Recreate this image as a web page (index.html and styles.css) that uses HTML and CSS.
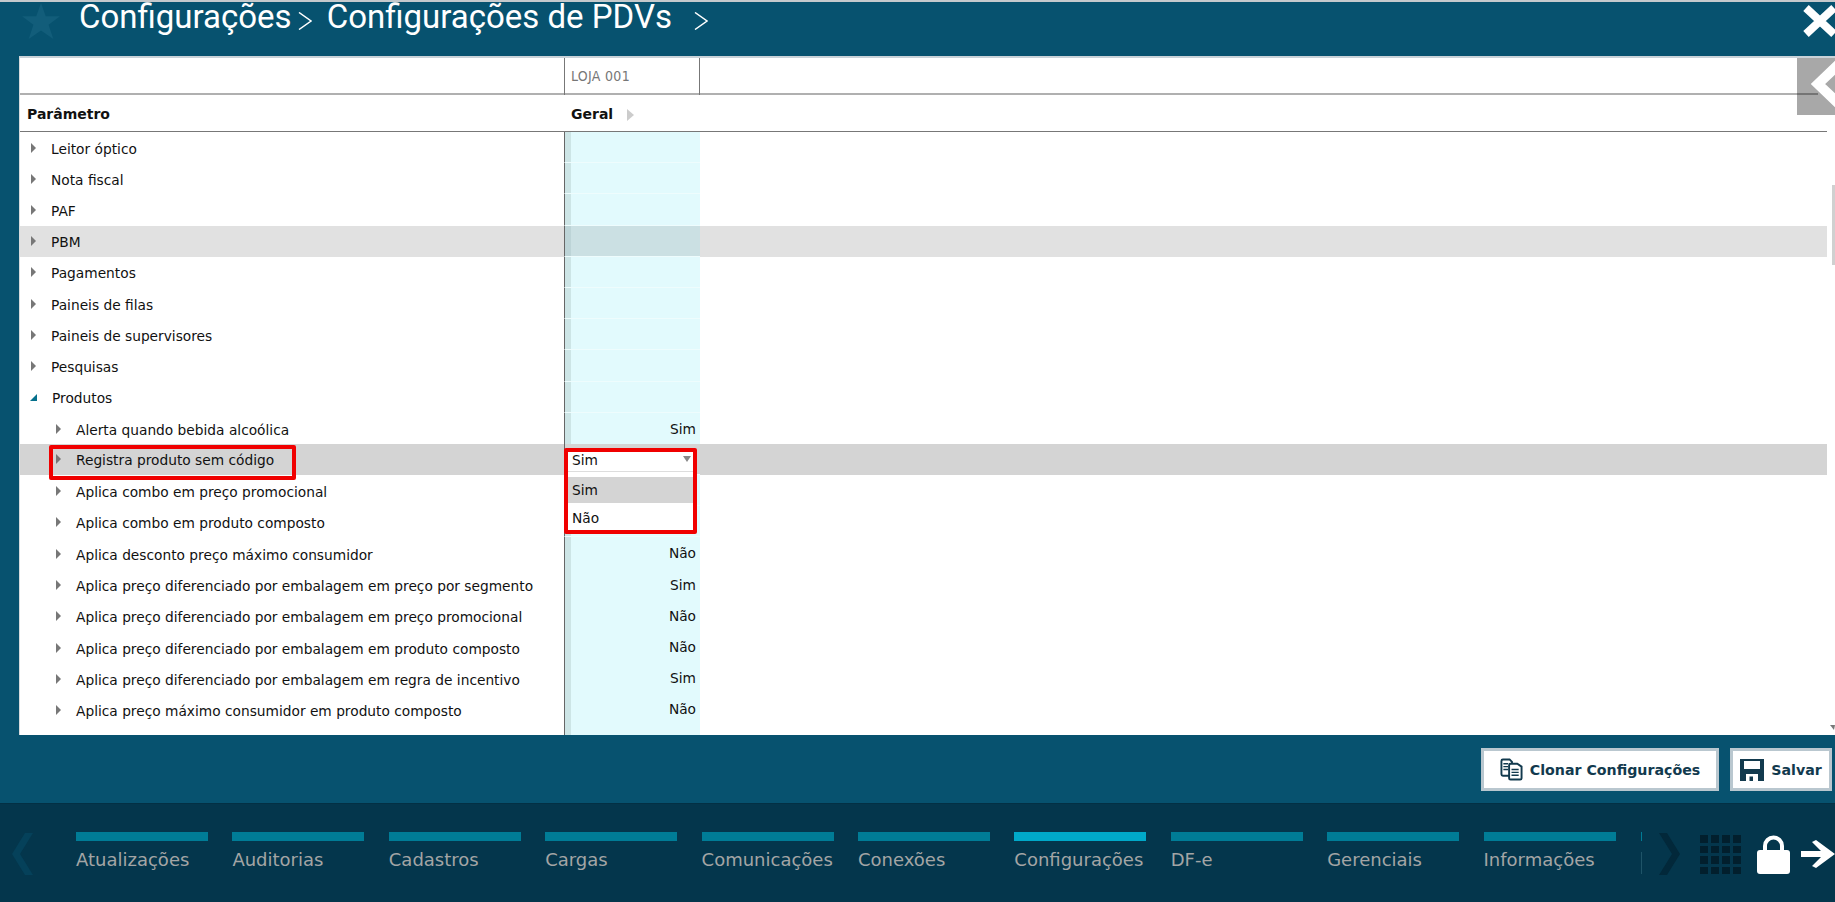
FILE: index.html
```html
<!DOCTYPE html>
<html lang="pt-BR">
<head>
<meta charset="utf-8">
<title>Configurações de PDVs</title>
<link rel="stylesheet" href="styles.css">
</head>
<body>
<div class="app">
  <header class="topbar">
    <svg class="star" viewBox="0 0 40 38"><polygon points="20,0 25,14 40,14 28,23 33,38 20,29 7,38 12,23 0,14 15,14"/></svg>
    <span class="crumb crumb-first">Configurações</span>
    <svg class="sep" viewBox="0 0 14 18"><path d="M1 0.500 L13 9 L1 17.500"/></svg>
    <span class="crumb crumb-second">Configurações de PDVs</span>
    <svg class="sep sep-last" viewBox="0 0 14 18"><path d="M1 0.500 L13 9 L1 17.500"/></svg>
    <svg class="close" viewBox="0 0 34 32"><path d="M3 3 L31 29 M31 3 L3 29"/></svg>
  </header>

  <main class="panel">
    <div class="head head-store">
      <div class="h-name"></div>
      <div class="h-store">LOJA 001</div>
    </div>
    <div class="head head-title">
      <div class="h-name">Parâmetro</div>
      <div class="h-group">Geral <i class="group-arrow"></i></div>
    </div>
    <div class="rows">
      <div class="row"><div class="name"><i class="tri"></i>Leitor óptico</div><div class="val"></div></div>
      <div class="row"><div class="name"><i class="tri"></i>Nota fiscal</div><div class="val"></div></div>
      <div class="row"><div class="name"><i class="tri"></i>PAF</div><div class="val"></div></div>
      <div class="row row-hover"><div class="name"><i class="tri"></i>PBM</div><div class="val"></div></div>
      <div class="row"><div class="name"><i class="tri"></i>Pagamentos</div><div class="val"></div></div>
      <div class="row"><div class="name"><i class="tri"></i>Paineis de filas</div><div class="val"></div></div>
      <div class="row"><div class="name"><i class="tri"></i>Paineis de supervisores</div><div class="val"></div></div>
      <div class="row"><div class="name"><i class="tri"></i>Pesquisas</div><div class="val"></div></div>
      <div class="row"><div class="name"><i class="tri-open"></i>Produtos</div><div class="val"></div></div>
      <div class="row child"><div class="name"><i class="tri"></i>Alerta quando bebida alcoólica</div><div class="val">Sim</div></div>
      <div class="row child row-selected"><div class="name"><i class="tri"></i>Registra produto sem código</div><div class="val"></div></div>
      <div class="row child"><div class="name"><i class="tri"></i>Aplica combo em preço promocional</div><div class="val"></div></div>
      <div class="row child"><div class="name"><i class="tri"></i>Aplica combo em produto composto</div><div class="val"></div></div>
      <div class="row child"><div class="name"><i class="tri"></i>Aplica desconto preço máximo consumidor</div><div class="val">Não</div></div>
      <div class="row child"><div class="name"><i class="tri"></i>Aplica preço diferenciado por embalagem em preço por segmento</div><div class="val">Sim</div></div>
      <div class="row child"><div class="name"><i class="tri"></i>Aplica preço diferenciado por embalagem em preço promocional</div><div class="val">Não</div></div>
      <div class="row child"><div class="name"><i class="tri"></i>Aplica preço diferenciado por embalagem em produto composto</div><div class="val">Não</div></div>
      <div class="row child"><div class="name"><i class="tri"></i>Aplica preço diferenciado por embalagem em regra de incentivo</div><div class="val">Sim</div></div>
      <div class="row child"><div class="name"><i class="tri"></i>Aplica preço máximo consumidor em produto composto</div><div class="val">Não</div></div>
      <div class="row"><div class="name"></div><div class="val"></div></div>
    </div>

    <div class="mark mark-row"></div>
    <div class="dropdown">
      <div class="dd-value">Sim<i class="dd-arrow"></i></div>
      <div class="dd-option dd-active">Sim</div>
      <div class="dd-option dd-last">Não</div>
    </div>

    <div class="side-tab"><svg viewBox="0 0 38 59"><path d="M44 7 L21 29 L44 51"/></svg></div>
    <div class="scroll-thumb"></div>
    <i class="scroll-down"></i>
  </main>

  <div class="actions">
    <button class="btn btn-clone">
      <svg class="btn-icon" viewBox="0 0 24 24"><path class="doc" d="M3 1.500 h7 l2.500 2.500 v13 q0 1.500 -1.500 1.500 h-8 q-1.500 0 -1.500 -1.500 v-14 q0 -1.500 1.500 -1.500 z"/><path class="doc" d="M11 6 h7 l4.500 3 v12 q0 1.500 -1.500 1.500 h-10 q-1.500 0 -1.500 -1.500 v-13.500 q0 -1.500 1.500 -1.500 z"/><path class="lines" d="M3.500 6 h5 M3.500 9 h5 M3.500 12 h5 M12 12 h7.500 M12 15 h7.500 M12 18 h7.500"/></svg>
      Clonar Configurações
    </button>
    <button class="btn btn-save">
      <svg class="btn-icon save-icon" viewBox="0 0 24 22"><path fill-rule="evenodd" d="M0 0 H24 V22 H0 Z M4 2 V10 H20 V2 Z M6 15 V22 H18 V15 Z M9.500 17.500 H13 V22 H9.500 Z"/></svg>
      Salvar
    </button>
  </div>

  <footer class="dock">
    <svg class="chev chev-left" viewBox="0 0 21 42"><path d="M21 0 H13 L0 21 L13 42 H21 L8 21 Z"/></svg>
    <nav class="modules">
      <a class="module">Atualizações</a>
      <a class="module">Auditorias</a>
      <a class="module">Cadastros</a>
      <a class="module">Cargas</a>
      <a class="module">Comunicações</a>
      <a class="module">Conexões</a>
      <a class="module module-active">Configurações</a>
      <a class="module">DF-e</a>
      <a class="module">Gerenciais</a>
      <a class="module">Informações</a>
      <i class="module-sliver"></i>
    </nav>
    <svg class="chev chev-right" viewBox="0 0 21 42"><path d="M0 0 H8 L21 21 L8 42 H0 L13 21 Z"/></svg>
    <div class="apps">
      <i></i><i></i><i></i><i></i><i></i><i></i><i></i><i></i><i></i><i></i><i></i><i></i><i></i><i></i><i></i><i></i>
    </div>
    <svg class="lock" viewBox="0 0 33 40"><path class="shackle" d="M8 19 V12 a8.500 8.500 0 0 1 17 0 V19"/><rect y="16" width="33" height="24" rx="3"/></svg>
    <svg class="exit" viewBox="0 0 34 28"><path d="M0 11 H20 L11 2 L15 0 L34 14 L15 28 L11 26 L20 17 H0 Z"/></svg>
  </footer>
</div>
</body>
</html>
```

FILE: styles.css
```css
* { box-sizing: border-box; }
html, body { margin: 0; height: 100%; overflow: hidden; }
body { font-family: "DejaVu Sans", Verdana, sans-serif; color: #111; background: #07526f; }
.app { display: flex; flex-direction: column; height: 902px; border-top: 2px solid #c4c9cc; }

.topbar { height: 54px; flex: none; display: flex; align-items: flex-start; background: #07526f; position: relative; color: #fff; }
.star { width: 40px; height: 36px; margin: 1px 0 0 21px; flex: none; }
.star polygon { fill: #125d7a; }
.crumb { font-family: Roboto, sans-serif; font-size: 33px; line-height: 30px; white-space: nowrap; }
.crumb-first { margin-left: 18px; }
.crumb-second { margin-left: 15px; }
.sep { width: 14px; height: 18px; margin: 10px 0 0 6px; flex: none; }
.sep-last { margin-left: 22px; }
.sep path { fill: none; stroke: #fff; stroke-width: 1.500; }
.close { position: absolute; right: -2px; top: 3px; width: 34px; height: 32px; }
.close path { fill: none; stroke: #fff; stroke-width: 8; }

.panel { height: 679px; flex: none; margin-left: 19px; background: #fff; padding-right: 8px; position: relative; overflow: hidden; border-top: 2px solid #c9d2d8; border-left: 1px solid #d6dadc; font-size: 13.750px; }
.head { display: grid; grid-template-columns: 544px 136px 1fr; }
.head-store { height: 37px; border-bottom: 2px solid #b0b0b0; margin-right: 9px; }
.head-title { height: 37px; border-bottom: 1px solid #777; font-weight: 700; font-size: 14px; }
.h-name { padding-left: 7px; line-height: 38px; color: #111; }
.h-store { border-left: 1px solid #777; border-right: 1px solid #777; padding-left: 6px; line-height: 37px; color: #777; font-size: 14px; font-stretch: condensed; letter-spacing: .3px; }
.h-group { padding-left: 7px; line-height: 38px; }
.group-arrow { display: inline-block; margin-left: 9px; border-left: 7px solid #ccc; border-top: 6px solid transparent; border-bottom: 6px solid transparent; vertical-align: -2px; }

.row { display: grid; grid-template-columns: 544px 136px 1fr; height: 31.200px; }
.name { display: flex; align-items: center; padding: 2px 0 0 11px; white-space: nowrap; }
.child .name { padding-left: 36px; }
.tri { flex: none; width: 0; height: 0; margin: -2px 15px 0 0; border-left: 5px solid #777; border-top: 5px solid transparent; border-bottom: 5px solid transparent; }
.tri-open { flex: none; width: 0; height: 0; margin: -2px 15px 0 -1px; border-bottom: 7px solid #05708c; border-left: 7px solid transparent; }
.val { border-left: 1px solid #666; border-bottom: 1px solid #eefcfd; padding-right: 4px; text-align: right; line-height: 32px; background: linear-gradient(to right, #cde5e6 6px, #e2fafd 6px); width: 136px; }
.row-hover { background: #e1e1e1; }
.row-hover .val { background: linear-gradient(to right, #bdd4d7 6px, #cbe0e3 6px); }
.row-selected { background: #d4d4d4; }
.row-selected .val { background: #d4d4d4; }

.mark { position: absolute; border: 4px solid #f00000; border-radius: 2px; }
.mark-row { left: 29px; top: 387px; width: 247px; height: 35px; }
.dropdown { position: absolute; left: 544px; top: 390px; width: 133px; height: 86px; border: 4px solid #f00000; border-radius: 2px; background: #fff; }
.dd-value { height: 20px; line-height: 17px; padding-left: 4px; background: #fff; position: relative; border-bottom: 1px solid #ddd; }
.dd-arrow { position: absolute; right: 2px; top: 4px; border-top: 6px solid #888; border-left: 4.500px solid transparent; border-right: 4.500px solid transparent; }
.dd-option { height: 26px; line-height: 26px; padding-left: 4px; }
.dd-active { margin-top: 5px; background: #d4d4d4; }
.dd-last { height: 27px; line-height: 31px; }

.side-tab { position: absolute; right: 0; top: -3px; width: 38px; height: 60px; background: rgba(0, 0, 0, .34); }
.side-tab svg { display: block; width: 38px; height: 59px; }
.side-tab path { fill: none; stroke: #fff; stroke-width: 10; }
.scroll-thumb { position: absolute; right: 0; top: 127px; width: 3px; height: 80px; background: #d0d0d0; }
.scroll-down { position: absolute; right: 0; bottom: 5px; border-top: 5px solid #777; border-left: 4px solid transparent; border-right: 1px solid transparent; }

.actions { height: 68px; flex: none; display: flex; justify-content: flex-end; gap: 11px; padding: 13px 3px 0 0; background: #07526f; }
.btn { height: 43px; display: flex; align-items: center; justify-content: center; gap: 7px; background: #fff; border: 3px solid #b9c7cf; font: 700 14.200px "DejaVu Sans", sans-serif; color: #123a4e; padding: 0; }
.btn-clone { width: 238px; }
.btn-save { width: 102px; }
.btn-icon { width: 23px; height: 23px; flex: none; }
.save-icon { width: 24px; height: 22px; }
.doc { fill: #fff; stroke: #123a4e; stroke-width: 2; }
.lines { fill: none; stroke: #123a4e; stroke-width: 1.500; }
.save-icon path { fill: #123a4e; }

.dock { flex: 1; background: #04364c; display: flex; position: relative; border-top: 1px solid #033044; overflow: hidden; }
.chev { position: absolute; top: 29px; width: 21px; height: 42px; }
.chev-left { left: 12px; }
.chev-left path { fill: #05415a; }
.chev-right { left: 1659px; }
.chev-right path { fill: #02283a; }
.modules { display: flex; margin-left: 76px; padding-top: 28px; gap: 24.400px; }
.module { flex: none; width: 132px; height: 60px; border-top: 9px solid #007c96; color: #a3a5a5; font-size: 18px; line-height: 30px; padding-top: 4px; white-space: nowrap; }
.module-active { border-top-color: #00a9c9; }
.module-sliver { flex: none; width: 1px; height: 42px; margin-left: 1px; background: linear-gradient(to bottom, #007c96 9px, transparent 9px, transparent 20px, #1f5468 20px); }
.apps { position: absolute; left: 1700px; top: 31px; width: 41px; display: grid; grid-template-columns: repeat(4, 8px); gap: 3px; }
.apps i { height: 7.500px; background: #021f2d; }
.lock { position: absolute; left: 1757px; top: 30px; width: 33px; height: 40px; }
.lock rect { fill: #fff; }
.shackle { fill: none; stroke: #fff; stroke-width: 4; }
.exit { position: absolute; left: 1801px; top: 36px; width: 34px; height: 28px; }
.exit path { fill: #fff; }
```
